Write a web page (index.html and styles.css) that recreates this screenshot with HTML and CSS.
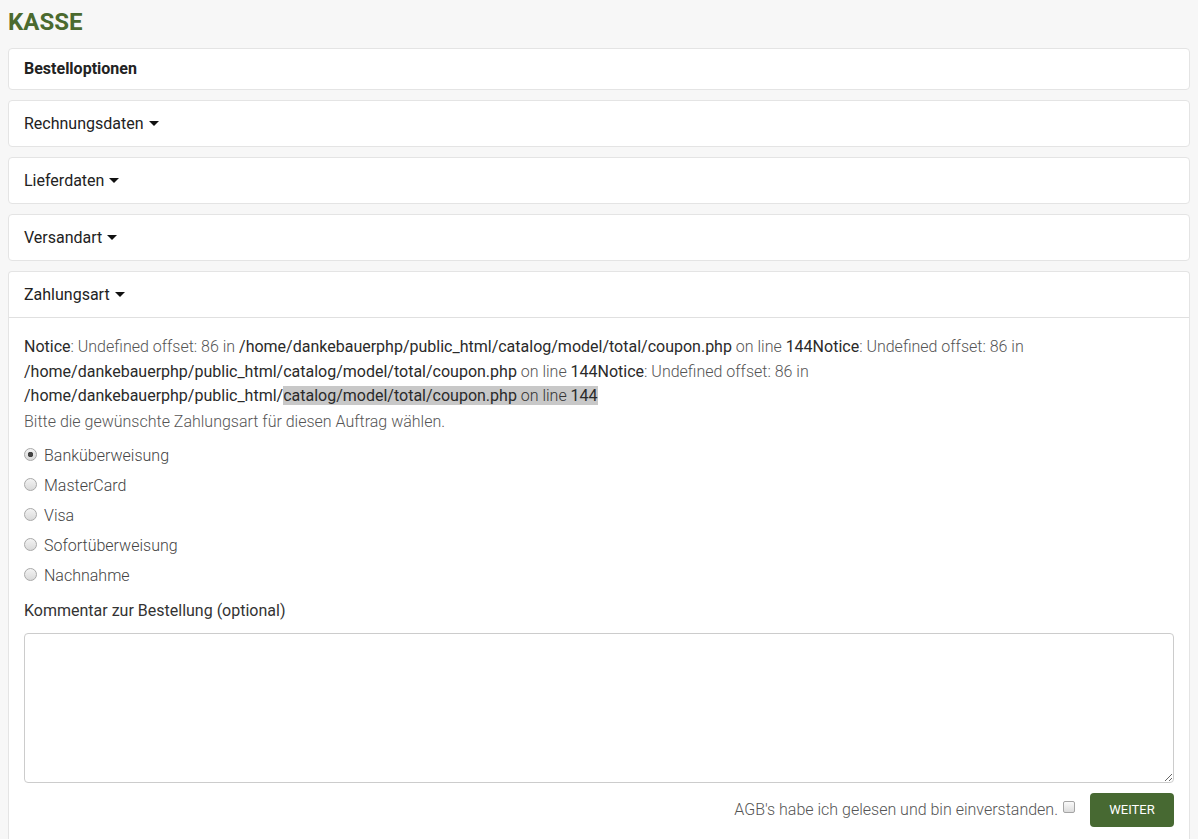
FILE: index.html
```html
<!DOCTYPE html>
<html lang="de">

<head>
    <meta charset="UTF-8">
    <meta name="viewport" content="width=device-width, initial-scale=1.0">
    <title>Kasse</title>
    <link rel="stylesheet" href="styles.css">
</head>

<body>
    <h1 class="title">KASSE</h1>

    <div class="panel">
        <div class="panel-heading strong">Bestelloptionen</div>
    </div>
    <div class="panel">
        <div class="panel-heading">Rechnungsdaten <i class="caret"></i></div>
    </div>
    <div class="panel">
        <div class="panel-heading">Lieferdaten <i class="caret"></i></div>
    </div>
    <div class="panel">
        <div class="panel-heading">Versandart <i class="caret"></i></div>
    </div>
    <div class="panel last">
        <div class="panel-heading open">Zahlungsart <i class="caret"></i></div>
        <div class="panel-body">
            <p class="notice"><b>Notice</b>: Undefined offset: 86 in <b>/home/dankebauerphp/public_html/catalog/model/total/coupon.php</b> on line <b>144</b><b>Notice</b>: Undefined offset: 86 in <b>/home/dankebauerphp/public_html/catalog/model/total/coupon.php</b> on line <b>144</b><b>Notice</b>: Undefined offset: 86 in <b>/home/dankebauerphp/public_html/</b><span class="sel"><b>catalog/model/total/coupon.php</b> on line <b>144</b></span></p>
            <p class="hint">Bitte die gewünschte Zahlungsart für diesen Auftrag wählen.</p>

            <div class="radios">
                <label class="radio"><input type="radio" name="pay" checked> Banküberweisung</label>
                <label class="radio"><input type="radio" name="pay"> MasterCard</label>
                <label class="radio"><input type="radio" name="pay"> Visa</label>
                <label class="radio"><input type="radio" name="pay"> Sofortüberweisung</label>
                <label class="radio"><input type="radio" name="pay"> Nachnahme</label>
            </div>

            <p class="comment-label">Kommentar zur Bestellung (optional)</p>
            <textarea class="comment" rows="8"></textarea>

            <div class="actions">
                <span class="agb">AGB's habe ich gelesen und bin einverstanden.</span>
                <input type="checkbox" class="check">
                <button class="btn">WEITER</button>
            </div>
        </div>
    </div>
</body>

</html>
```

FILE: styles.css
```css
html,
body {
    height: 100%;
}

body {
    margin: 0;
    padding: 8px 8px 0;
    box-sizing: border-box;
    background: #f7f7f7;
    font-family: Roboto, "Liberation Sans", sans-serif;
    font-size: 16px;
    color: #333;
    overflow: hidden;
}

.title {
    margin: 1px 0 13px;
    font-size: 24px;
    line-height: 26px;
    font-weight: bold;
    color: #4b6a2e;
}

.panel {
    background: #fff;
    border: 1px solid #e4e4e4;
    border-radius: 4px;
    margin-bottom: 10px;
}

.panel.last {
    margin-bottom: 0;
    border-bottom: none;
    border-radius: 4px 4px 0 0;
}

.panel-heading {
    padding: 12px 15px;
    font-size: 16px;
    line-height: 21px;
    color: #222;
}

.panel-heading.strong {
    font-weight: bold;
    line-height: 18px;
    padding: 11px 15px;
}

.panel-heading.open {
    border-bottom: 1px solid #e0e0e0;
}

.caret {
    display: inline-block;
    width: 0;
    height: 0;
    margin-left: 1px;
    vertical-align: 3px;
    border-top: 5px solid #111;
    border-left: 5px solid transparent;
    border-right: 5px solid transparent;
}

.panel-body {
    padding: 17px 15px 12px;
    font-weight: 300;
    color: #555;
}

.panel-body p {
    margin: 0;
}

.notice {
    line-height: 24.5px;
}

.notice b {
    font-weight: 400;
    color: #2a2a2a;
}

.sel {
    background: #c8c8c8;
    color: #333;
}

.hint {
    line-height: 24px;
    margin-top: 1px !important;
}

.radios {
    margin-top: 7px;
}

.radio {
    display: flex;
    align-items: center;
    height: 30px;
    color: #444;
}

.radio input {
    appearance: none;
    width: 13px;
    height: 13px;
    margin: -3px 7px 0 0;
    border-radius: 50%;
    border: 1px solid #a9a9a9;
    background: linear-gradient(#f3f3f3, #d9d9d9);
}

.radio input:checked {
    background: radial-gradient(circle, #444 0, #444 2.5px, transparent 3px), linear-gradient(#f3f3f3, #d9d9d9);
}

.comment-label {
    margin-top: 10px !important;
    line-height: 20px;
    font-weight: 400;
    color: #333;
}

.comment {
    display: block;
    box-sizing: border-box;
    width: 100%;
    height: 150px;
    margin-top: 12px;
    border: 1px solid #ccc;
    border-radius: 4px;
    background: #fff;
}

.actions {
    display: flex;
    justify-content: flex-end;
    align-items: center;
    margin-top: 10px;
}

.agb {
    color: #555;
}

.check {
    appearance: none;
    width: 12px;
    height: 12px;
    margin: -6px 15px 0 5px;
    border: 1px solid #a5a5a5;
    border-radius: 2px;
    background: linear-gradient(#fafafa, #dcdcdc);
}

.btn {
    width: 84px;
    height: 34px;
    border: none;
    border-radius: 4px;
    background: #476932;
    color: #fff;
    font-family: inherit;
    font-size: 13px;
    cursor: pointer;
}
```
